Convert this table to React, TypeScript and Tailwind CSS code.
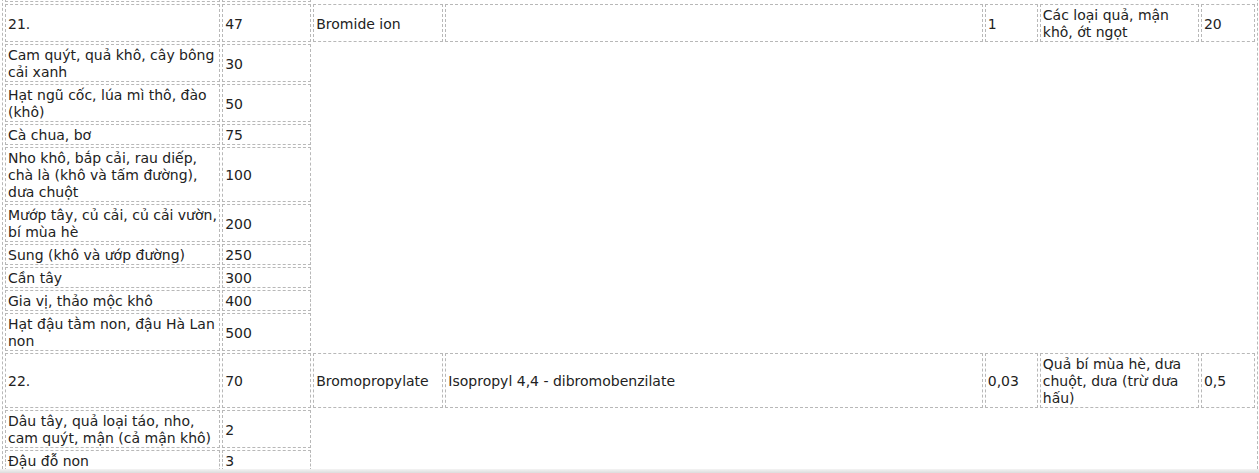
import React from "react";

const cell =
  "border border-dashed border-[#b8b8b8] px-[2px] pt-[2px] pb-0 align-middle whitespace-nowrap overflow-visible";

type Sub = { lines: string[]; v: string };

const Lines = ({ lines }: { lines: string[] }) => (
  <>
    {lines.map((l, i) => (
      <React.Fragment key={i}>
        {i > 0 && <br />}
        {l}
      </React.Fragment>
    ))}
  </>
);

const group21: Sub[] = [
  { lines: ["Cam quýt, quả khô, cây bông", "cải xanh"], v: "30" },
  { lines: ["Hạt ngũ cốc, lúa mì thô, đào", "(khô)"], v: "50" },
  { lines: ["Cà chua, bơ"], v: "75" },
  { lines: ["Nho khô, bắp cải, rau diếp,", "chà là (khô và tấm đường),", "dưa chuột"], v: "100" },
  { lines: ["Mướp tây, củ cải, củ cải vườn,", "bí mùa hè"], v: "200" },
  { lines: ["Sung (khô và ướp đường)"], v: "250" },
  { lines: ["Cần tây"], v: "300" },
  { lines: ["Gia vị, thảo mộc khô"], v: "400" },
  { lines: ["Hạt đậu tằm non, đậu Hà Lan", "non"], v: "500" },
];

const group22: Sub[] = [
  { lines: ["Dâu tây, quả loại táo, nho,", "cam quýt, mận (cả mận khô)"], v: "2" },
  { lines: ["Đậu đỗ non"], v: "3" },
];

const MainRow = ({ c }: { c: (string[] | string)[] }) => (
  <tr>
    {c.map((x, i) => (
      <td key={i} className={cell}>
        {Array.isArray(x) ? <Lines lines={x} /> : x || "\u00a0"}
      </td>
    ))}
  </tr>
);

const SubRows = ({ rows }: { rows: Sub[] }) => (
  <>
    {rows.map((r, i) => (
      <tr key={i}>
        <td className={cell}>
          <Lines lines={r.lines} />
        </td>
        <td className={cell}>{r.v}</td>
      </tr>
    ))}
  </>
);

export default function App() {
  return (
    <div
      className="relative h-[473px] w-[1259px] overflow-hidden bg-white text-[14px] leading-[17px] text-[#222222]"
      style={{ fontFamily: '"DejaVu Sans", Verdana, sans-serif' }}
    >
      <table className="ml-[2px] mt-[-22px] w-[1256px] table-fixed border-separate border-spacing-[2px] border border-dashed border-[#b8b8b8]">
        <colgroup>
          <col className="w-[215px]" />
          <col className="w-[89px]" />
          <col className="w-[130px]" />
          <col className="w-[537px]" />
          <col className="w-[53px]" />
          <col className="w-[159px]" />
          <col className="w-[54px]" />
        </colgroup>
        <tbody>
          <tr>
            <td className={cell}>{"\u00a0"}</td>
            <td className={cell}>{"\u00a0"}</td>
          </tr>
          <MainRow
            c={["21.", "47", "Bromide ion", "", "1", ["Các loại quả, mận", "khô, ớt ngọt"], "20"]}
          />
          <SubRows rows={group21} />
          <MainRow
            c={[
              "22.",
              "70",
              "Bromopropylate",
              "Isopropyl 4,4 - dibromobenzilate",
              "0,03",
              ["Quả bí mùa hè, dưa", "chuột, dưa (trừ dưa", "hấu)"],
              "0,5",
            ]}
          />
          <SubRows rows={group22} />
        </tbody>
      </table>
      <div className="absolute bottom-0 left-0 h-[4px] w-full bg-gradient-to-b from-[#f4f4f4] to-[#dcdcdc]" />
    </div>
  );
}
